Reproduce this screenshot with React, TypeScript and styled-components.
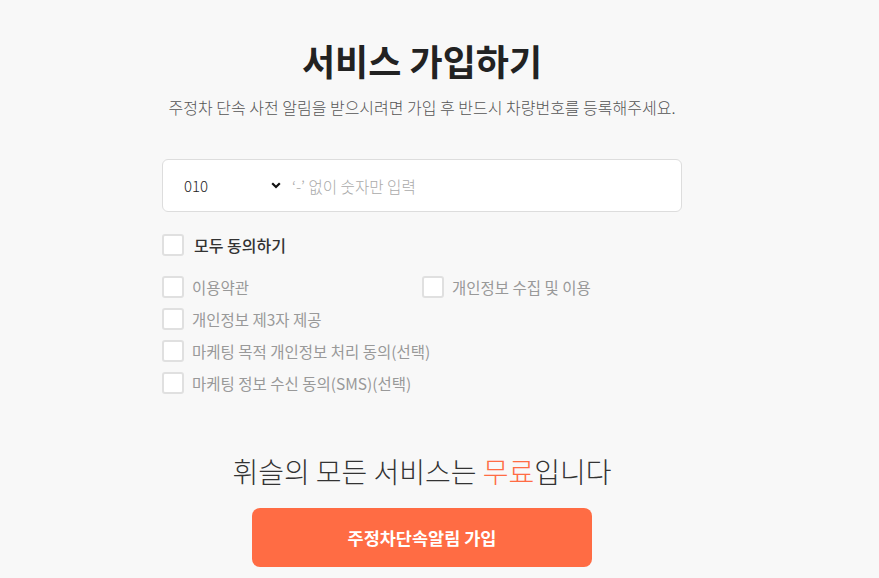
import React, { useState } from 'react';
import styled, { createGlobalStyle } from 'styled-components';

const GlobalStyle = createGlobalStyle`
    body {
        margin: 0;
        background: #f8f8f8;
        font-family: "Noto Sans CJK KR", "Noto Sans", sans-serif;
    }
    * {
        box-sizing: border-box;
    }
`;

const Page = styled.div`
    display: flex;
    flex-direction: column;
    align-items: center;
    padding: 35px 35px 0 0;
`;

const Title = styled.h1`
    margin: 0;
    font-size: 36px;
    line-height: 50px;
    font-weight: 700;
    color: #222;
`;

const Subtitle = styled.p`
    margin: 10px 0 0 0;
    font-size: 16px;
    line-height: 24px;
    font-weight: 300;
    color: #555;
`;

const Form = styled.div`
    width: 520px;
    margin-top: 40px;
    display: flex;
    flex-direction: column;
`;

const PhoneBox = styled.div`
    display: flex;
    align-items: center;
    height: 53px;
    background: #fff;
    border: 1px solid #ddd;
    border-radius: 6px;
    padding: 0 0 0 21px;
`;

const SelectWrap = styled.label`
    display: flex;
    align-items: center;
    flex-shrink: 0;
    margin-right: 11px;
`;

const Select = styled.select`
    appearance: none;
    border: none;
    background: transparent;
    font-family: inherit;
    font-size: 15px;
    font-weight: 300;
    color: #222;
    width: 87px;
    padding: 0;
    outline: none;
`;

const PhoneInput = styled.input`
    flex: 1;
    border: none;
    background: transparent;
    font-family: inherit;
    font-size: 15.6px;
    font-weight: 300;
    color: #333;
    outline: none;
    padding: 0;
    &::placeholder {
        color: #aaa;
    }
`;

const AllRow = styled.label`
    display: flex;
    align-items: center;
    gap: 10px;
    margin-top: 21px;
    font-size: 16px;
    font-weight: 500;
    color: #333;
    cursor: pointer;
`;

const TermsGrid = styled.div`
    display: grid;
    grid-template-columns: 260px 260px;
    row-gap: 10px;
    margin-top: 19px;
`;

const TermRow = styled.label<{ $wide?: boolean }>`
    display: flex;
    align-items: center;
    gap: 8px;
    font-size: 15.5px;
    line-height: 22px;
    color: #999;
    cursor: pointer;
    grid-column: ${({ $wide }) => ($wide ? '1 / span 2' : 'auto')};
`;

const Box = styled.span<{ $checked: boolean }>`
    width: 22px;
    height: 22px;
    flex-shrink: 0;
    border: 2px solid #e0e0e0;
    border-radius: 3px;
    background: ${({ $checked }) => ($checked ? '#ff6c44' : '#fff')};
    display: flex;
    align-items: center;
    justify-content: center;
`;

const Free = styled.p`
    margin: 57px 0 0 0;
    text-align: center;
    font-size: 28px;
    line-height: 40px;
    font-weight: 300;
    color: #333;
`;

const Accent = styled.span`
    color: #ff6c44;
`;

const SubmitButton = styled.button`
    align-self: center;
    width: 340px;
    height: 59px;
    margin-top: 17px;
    border: none;
    border-radius: 8px;
    background: #ff6c44;
    color: #fff;
    font-family: inherit;
    font-size: 17.5px;
    font-weight: 700;
    cursor: pointer;
`;

const terms = [
    { key: 'service', label: '이용약관' },
    { key: 'privacy', label: '개인정보 수집 및 이용' },
    { key: 'third', label: '개인정보 제3자 제공', wide: true },
    { key: 'marketing', label: '마케팅 목적 개인정보 처리 동의(선택)', wide: true },
    { key: 'sms', label: '마케팅 정보 수신 동의(SMS)(선택)', wide: true },
];

const Check: React.FC<{ checked: boolean }> = ({ checked }) => (
    <Box $checked={checked}>
        {checked && (
            <svg width="12" height="12" viewBox="0 0 12 12">
                <path d="M2 6l3 3 5-6" stroke="#fff" strokeWidth="2" fill="none" />
            </svg>
        )}
    </Box>
);

const App: React.FC = () => {
    const [prefix, setPrefix] = useState('010');
    const [phone, setPhone] = useState('');
    const [checked, setChecked] = useState<Record<string, boolean>>({});

    const allChecked = terms.every(t => checked[t.key]);

    const toggleAll = () => {
        const next: Record<string, boolean> = {};
        terms.forEach(t => { next[t.key] = !allChecked; });
        setChecked(next);
    };

    const toggle = (key: string) => {
        setChecked(prev => ({ ...prev, [key]: !prev[key] }));
    };

    return (
        <React.Fragment>
            <GlobalStyle />
            <Page>
                <Title>서비스 가입하기</Title>
                <Subtitle>주정차 단속 사전 알림을 받으시려면 가입 후 반드시 차량번호를 등록해주세요.</Subtitle>
                <Form>
                    <PhoneBox>
                        <SelectWrap>
                            <Select value={prefix} onChange={e => setPrefix(e.target.value)}>
                                <option>010</option>
                                <option>011</option>
                                <option>016</option>
                                <option>017</option>
                                <option>018</option>
                                <option>019</option>
                            </Select>
                            <svg width="10" height="7" viewBox="0 0 10 7">
                                <path d="M1.2 1.2l3.8 3.8 3.8-3.8" stroke="#111" strokeWidth="2.2" fill="none" />
                            </svg>
                        </SelectWrap>
                        <PhoneInput
                            type="tel"
                            placeholder="‘-’ 없이 숫자만 입력"
                            value={phone}
                            onChange={e => setPhone(e.target.value)}
                        />
                    </PhoneBox>
                    <AllRow onClick={toggleAll}>
                        <Check checked={allChecked} />
                        모두 동의하기
                    </AllRow>
                    <TermsGrid>
                        {terms.map(t => (
                            <TermRow key={t.key} $wide={t.wide} onClick={() => toggle(t.key)}>
                                <Check checked={!!checked[t.key]} />
                                {t.label}
                            </TermRow>
                        ))}
                    </TermsGrid>
                </Form>
                <Free>휘슬의 모든 서비스는 <Accent>무료</Accent>입니다</Free>
                <SubmitButton>주정차단속알림 가입</SubmitButton>
            </Page>
        </React.Fragment>
    );
};

export default App;
